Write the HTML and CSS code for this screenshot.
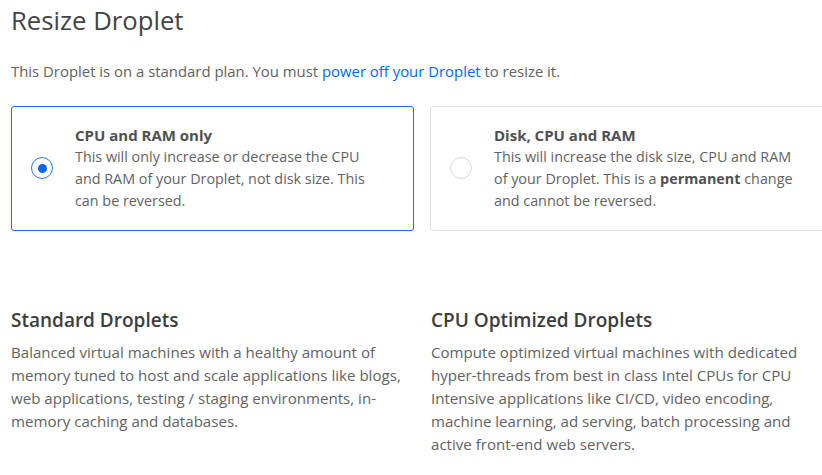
FILE: index.html
```html
<!DOCTYPE html>
<html lang="en">

<head>
    <meta charset="UTF-8">
    <meta name="viewport" content="width=device-width, initial-scale=1.0">
    <title>Resize Droplet</title>
    <link rel="stylesheet" href="styles.css">
</head>

<body>
    <div class="page">
        <h1 class="page-title">Resize Droplet</h1>
        <p class="intro">This Droplet is on a standard plan. You must <a href="#">power off your Droplet</a> to resize it.</p>

        <div class="options">
            <label class="option selected">
                <span class="radio"></span>
                <span class="option-text">
                    <strong class="option-title">CPU and RAM only</strong>
                    This will only increase or decrease the CPU and RAM of your Droplet, not disk size. This can be reversed.
                </span>
            </label>
            <label class="option">
                <span class="radio"></span>
                <span class="option-text">
                    <strong class="option-title">Disk, CPU and RAM</strong>
                    This will increase the disk size, CPU and RAM of your Droplet. This is a <b>permanent</b> change and cannot be reversed.
                </span>
            </label>
        </div>

        <div class="plans">
            <div class="plan">
                <h3>Standard Droplets</h3>
                <p>Balanced virtual machines with a healthy amount of memory tuned to host and scale applications like blogs, web applications, testing / staging environments, in-memory caching and databases.</p>
            </div>
            <div class="plan">
                <h3>CPU Optimized Droplets</h3>
                <p>Compute optimized virtual machines with dedicated hyper-threads from best in class Intel CPUs for CPU Intensive applications like CI/CD, video encoding, machine learning, ad serving, batch processing and active front-end web servers.</p>
            </div>
        </div>
    </div>
</body>

</html>
```

FILE: styles.css
```css
body {
    margin: 0;
    overflow: hidden;
    background: #fff;
    font-family: "Open Sans", "Liberation Sans", sans-serif;
    color: #626262;
}

.page {
    padding: 5px 0 0 11px;
    width: 840px;
}

.page-title {
    margin: 0;
    font-size: 25.7px;
    font-weight: 400;
    line-height: 32px;
    color: #444;
}

.intro {
    margin: 22px 0 0;
    font-size: 14.9px;
    line-height: 24px;
}

.intro a {
    color: #0069ff;
    text-decoration: none;
}

.options {
    display: grid;
    grid-template-columns: 403px 403px;
    column-gap: 16px;
    margin-top: 23px;
}

.option {
    display: flex;
    align-items: center;
    gap: 22px;
    padding: 17px 20px 18px 19px;
    border: 1px solid #e2e2e2;
    border-radius: 3px;
    cursor: pointer;
}

/* selected card */
.option.selected {
    border-color: #1c6fe3;
}

.radio {
    flex: none;
    width: 20px;
    height: 20px;
    border: 1px solid #dcdcdc;
    border-radius: 50%;
    display: flex;
    align-items: center;
    justify-content: center;
}

.selected .radio {
    border: 1.5px solid #2a7be8;
}

.selected .radio::after {
    content: "";
    width: 9px;
    height: 9px;
    border-radius: 50%;
    background: #0a66f0;
}

.option-text {
    max-width: 305px;
    font-size: 14.35px;
    line-height: 22px;
}

.option-title {
    display: block;
    font-size: 15px;
    font-weight: 700;
    color: #505050;
}

.option-text b {
    color: #505050;
}

.plans {
    display: grid;
    grid-template-columns: 403px 403px;
    column-gap: 17px;
    margin-top: 77px;
}

.plan h3 {
    margin: 0;
    font-size: 19px;
    font-weight: 600;
    line-height: 24px;
    color: #3d3d3d;
}

.plan p {
    max-width: 394px;
    margin: 9px 0 0;
    font-size: 15.1px;
    line-height: 23px;
}
```
